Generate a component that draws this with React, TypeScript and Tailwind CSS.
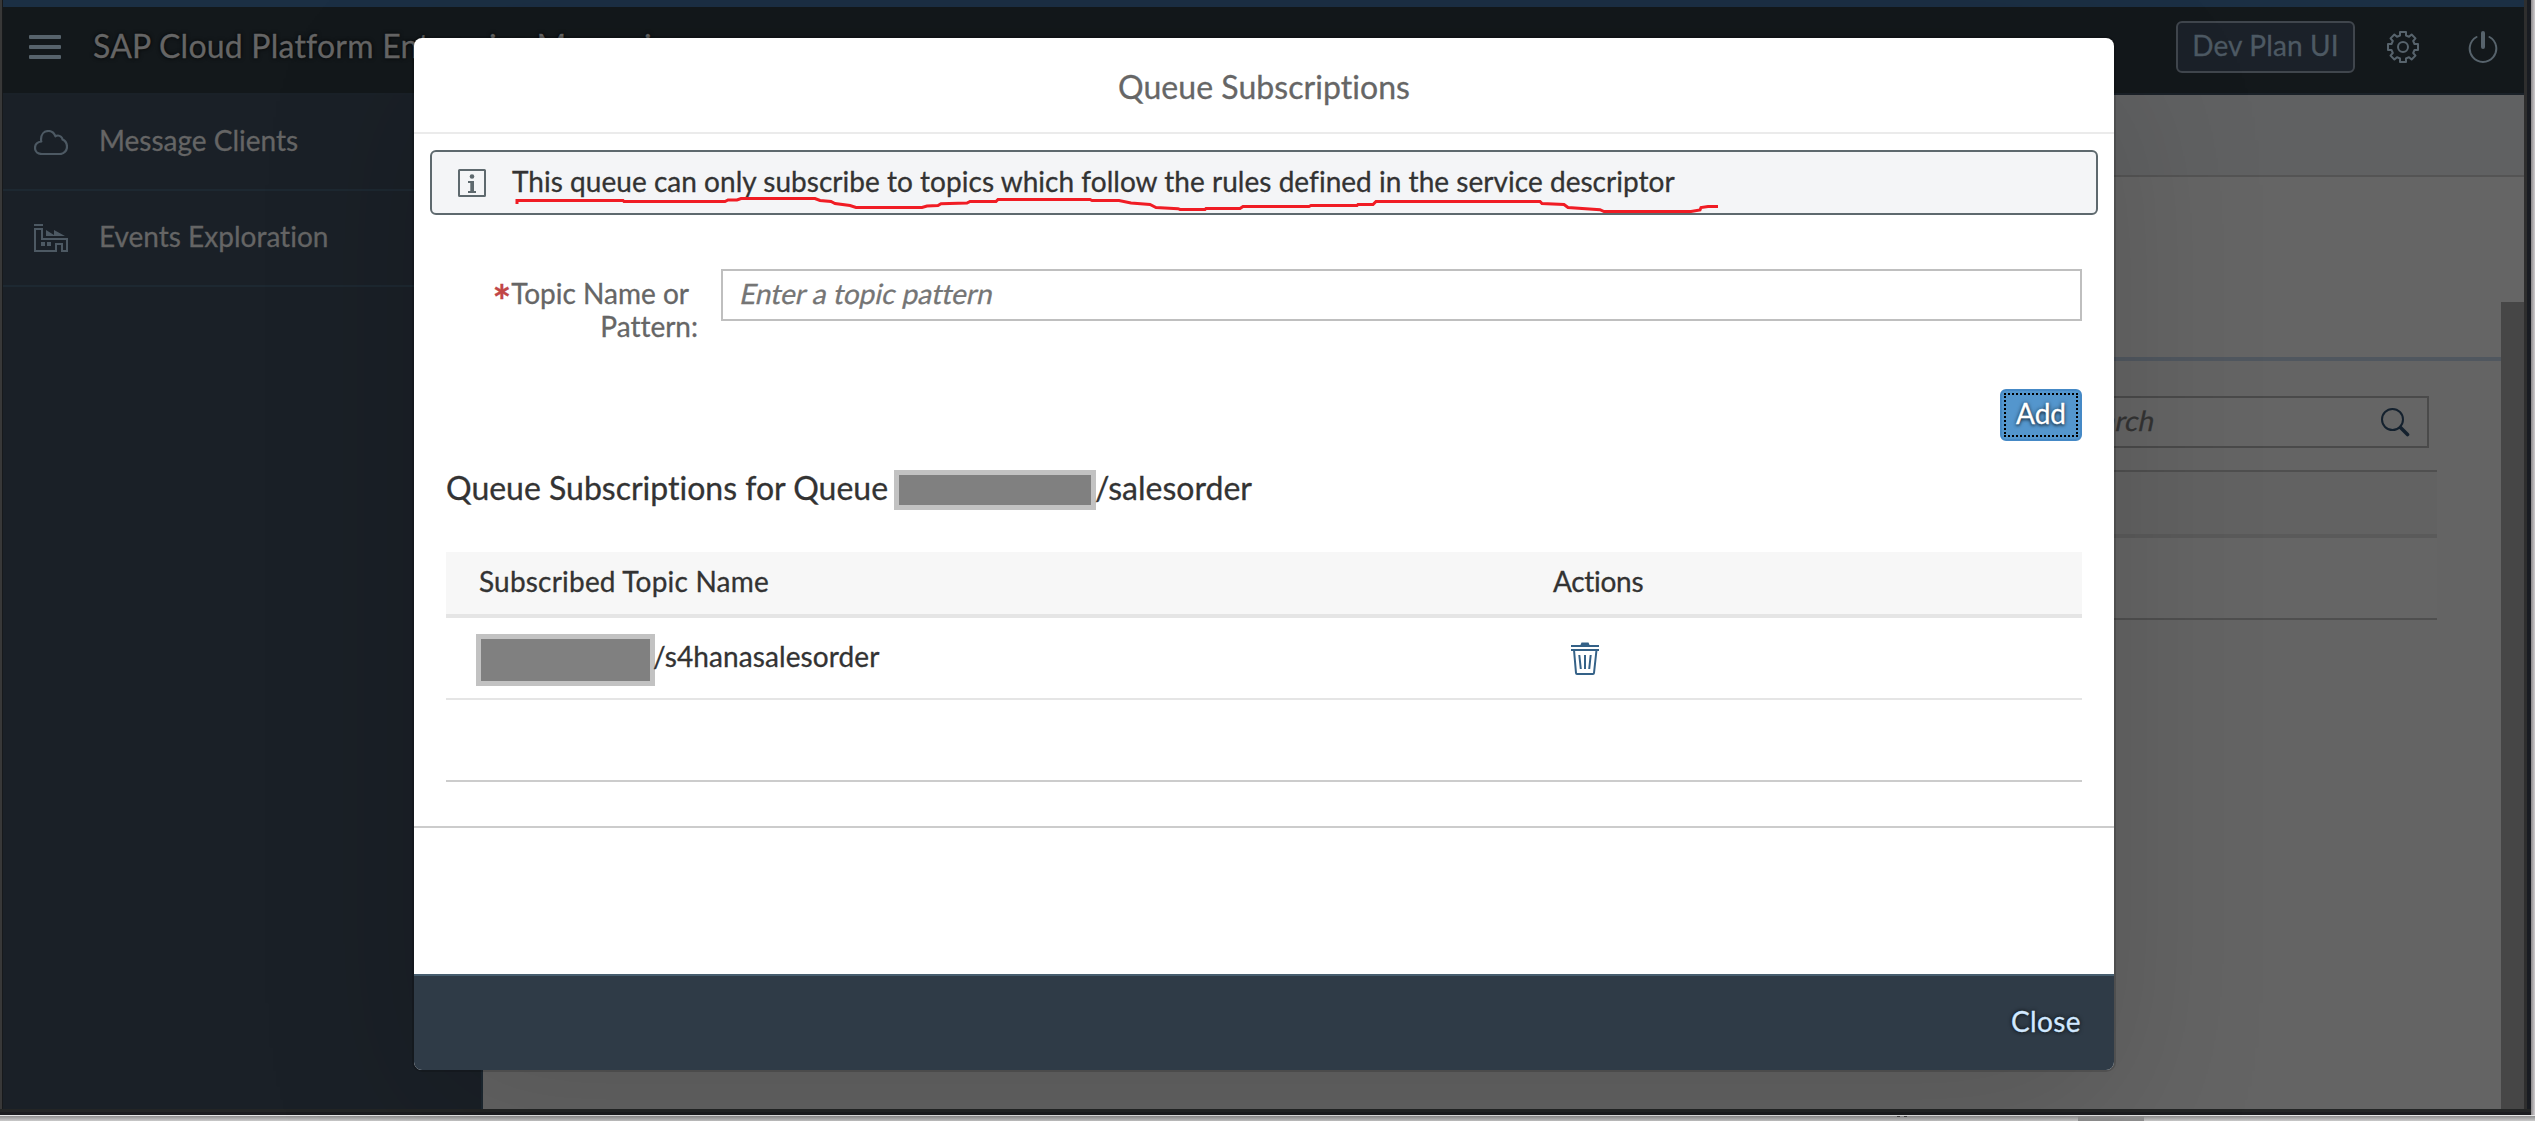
import type { ReactNode } from "react";

function CloudIcon() {
  return (
    <svg width="34" height="25" viewBox="0 0 34 25" fill="none" stroke="#4d5963" strokeWidth="2.200" strokeLinejoin="round">
      <path d="M8 24 H26 C30 24 33 20.500 33 17 C33 13.500 31 10.500 28.500 9.500 C28.500 7.500 26 5.500 24 5.500 C23 5.500 22 5.800 21.500 6.400 C20 2.500 17.500 1 14.500 1 C10 1 7 4.500 7 9.500 C7 10.200 7 11 7.300 11.500 C3.500 12 1 14.500 1 18 C1 21.500 4 24 8 24 Z" />
    </svg>
  );
}

function FactoryIcon() {
  return (
    <svg width="34" height="28" viewBox="0 0 34 28" fill="none" stroke="#4d5963" strokeWidth="2">
      <path d="M0 1 H9" />
      <path d="M1 27 V5 H8 V15 H33 V27 H28 V20 H22 V27 Z" />
      <path d="M12 12 V6 L20 11 V6 L31 12 Z" fill="#4d5963" stroke="none" />
      <path d="M7 18 H11 V22 H7 Z M13 18 H17 V22 H13 Z" fill="#4d5963" stroke="none" />
    </svg>
  );
}

function GearIcon() {
  return (
    <svg width="32" height="32" viewBox="0 0 32 32" fill="none" stroke="#57636c" strokeWidth="2" strokeLinejoin="round">
      <circle cx="16" cy="16" r="5" />
      <path d="M13 1 H19 V4.500 L22 5.800 L24.600 3.500 L28.500 7.400 L26.200 10 L27.500 13 H31 V19 H27.500 L26.200 22 L28.500 24.600 L24.600 28.500 L22 26.200 L19 27.500 V31 H13 V27.500 L10 26.200 L7.400 28.500 L3.500 24.600 L5.800 22 L4.500 19 H1 V13 H4.500 L5.800 10 L3.500 7.400 L7.400 3.500 L10 5.800 L13 4.500 Z" />
    </svg>
  );
}

function PowerIcon() {
  return (
    <svg width="30" height="32" viewBox="0 0 30 32" fill="none" stroke="#57636c" strokeLinecap="round">
      <path d="M8.500 6 A13.300 13.300 0 1 0 21.500 6" strokeWidth="2" />
      <path d="M15 2 V16" strokeWidth="4" />
    </svg>
  );
}

function SearchIcon() {
  return (
    <svg width="29" height="29" viewBox="0 0 29 29" fill="none" stroke="#14212e" strokeLinecap="round">
      <circle cx="11.500" cy="11.500" r="10.500" strokeWidth="2" />
      <path d="M19.500 19.500 L26.500 26.500" strokeWidth="3.600" />
    </svg>
  );
}

function InfoIcon() {
  return (
    <svg width="28" height="28" viewBox="0 0 28 28">
      <rect x="1" y="1" width="26" height="26" rx="0.500" fill="none" stroke="#5e696e" strokeWidth="2" />
      <circle cx="14" cy="7.500" r="2.300" fill="#5e696e" />
      <path d="M10 12 H16 V22 H18 V24 H10 V22 H12.300 V14 H10 Z" fill="#5e696e" />
    </svg>
  );
}

function TrashIcon() {
  return (
    <svg width="28" height="33" viewBox="0 0 28 33" fill="none" stroke="#346187" strokeWidth="2">
      <path d="M9 4 L10.500 0.500 H17.500 L19 4 Z" fill="#346187" stroke="none" />
      <path d="M0 4 H28 M0 8 H28" />
      <path d="M3 8 L5 31 Q5.100 32 6 32 H22 Q22.900 32 23 31 L25.500 8" />
      <path d="M8.300 13 L9.800 27 M14 13 V27 M19.700 13 L18.200 27" />
    </svg>
  );
}

function Hamburger() {
  return (
    <div className="flex w-8 flex-col gap-[6px]">
      <div className="h-1 rounded-[1px] bg-[#57636c]" />
      <div className="h-1 rounded-[1px] bg-[#57636c]" />
      <div className="h-1 rounded-[1px] bg-[#57636c]" />
    </div>
  );
}

function NavItem({ icon, label }: { icon: ReactNode; label: string }) {
  return (
    <div className="flex h-24 items-center border-b-2 border-[#1d2831] pl-[31px] text-[#656565]">
      <div className="w-[65px]">{icon}</div>
      <span className="pb-[4px]">{label}</span>
    </div>
  );
}

function Underline() {
  return (
    <svg
      className="pointer-events-none absolute left-[99px] top-[158px]"
      width="1210"
      height="18"
      viewBox="513 196 1210 18"
      fill="none"
      stroke="#f01c24"
      strokeWidth="3"
    >
      <path d="M517 204 V200.500 H623 L624 201.500 H725 L728 200 H737 L741 198.500 H815 L820 200.500 L831 201.500 L835 203.500 L850 205.500 L856 207.500 H922 L927 206 L938 205.500 L941 203.700 L967 203 L970 201.500 H996 L998 199.500 H1090 L1092 200.500 H1119 L1131 203 L1150 204.500 L1156 207.500 L1178 208.700 L1180 209.500 H1205 L1206 208.500 H1240 L1243 206.500 H1309 L1311 205.500 H1357 L1358 204.500 H1373 L1376 201.500 H1540 L1542 203.500 L1564 204.500 L1568 207.500 L1600 209.700 L1604 211.500 H1691 L1700 210 L1701 207.500 L1708 206.500 H1718" />
    </svg>
  );
}

function Dialog() {
  return (
    <div className="absolute left-[414px] top-[38px] flex h-[1032px] w-[1700px] flex-col overflow-visible rounded-[8px] bg-white text-[#333] shadow-[0_0_0_2px_rgba(0,0,0,0.15),0_40px_160px_0_rgba(0,0,0,0.15)]">
      <div className="flex h-24 items-center justify-center rounded-t-[8px] border-b-2 border-[#ebebeb] pt-[4px] text-[32px] text-[#666]">
        <span className="tracking-[0.05px]">Queue Subscriptions</span>
      </div>

      <div className="mx-4 mt-4 flex h-[65px] items-center rounded-[6px] border-2 border-[#5e696e] bg-[#f4f5f7] pl-[26px]">
        <InfoIcon />
        <span className="ml-[26px] pb-[3px] tracking-[0.03px]">
          This queue can only subscribe to topics which follow the rules defined in the service descriptor
        </span>
      </div>
      <Underline />

      <div className="mt-[54px] flex h-[77px] items-start pl-8 pr-8">
        <div className="w-[253px] pt-[8px] text-right leading-[33px] text-[#666]">
          <div className="flex justify-end pr-[10px]">
            <span className="h-[33px] pt-[7px] text-[44px] font-bold leading-[33px] text-[#c14646]">*</span>
            <span>Topic Name or</span>
          </div>
          <div className="pr-[1px]">Pattern:</div>
        </div>
        <div className="ml-[22px] flex h-[52px] flex-1 items-center border-2 border-[#bfbfbf] pb-[4px] pl-[18px] text-[#757575]">
          <span className="inline-block -skew-x-12">Enter a topic pattern</span>
        </div>
      </div>

      <div className="mt-[43px] flex justify-end pr-8">
        <button className="relative flex h-[52px] w-[82px] items-center justify-center rounded-[6px] border-2 border-[#4589c6] bg-[#5496cd] pb-[4px] text-white [text-shadow:0_0_4px_rgba(0,0,0,0.6),0_2px_3px_rgba(0,0,0,0.5)]">
          <span className="absolute inset-[2px] border-2 border-dotted border-black" />
          Add
        </button>
      </div>

      <div className="mt-[29px] flex h-10 items-center pl-8 text-[32px]">
        <span className="w-[448px] pb-[5px]">Queue Subscriptions for Queue</span>
        <div className="h-10 w-[202px] shrink-0 border-[5px] border-[#c2c2c2] bg-[#808080]" />
        <span className="-ml-px pb-[5px]">/salesorder</span>
      </div>

      <div className="mx-8 mt-[42px] border-b-2 border-[#ccc]">
        <div className="flex h-[66px] items-center border-b-4 border-[#e5e5e5] bg-[#f7f7f7] pb-[4px]">
          <span className="w-[1074px] pl-[33px] tracking-[0.2px]">Subscribed Topic Name</span>
          <span className="pl-[33px] tracking-[-0.3px]">Actions</span>
        </div>
        <div className="flex h-[82px] items-center border-b-2 border-[#e5e5e5]">
          <div className="flex w-[1125px] items-center pl-[30px]">
            <div className="mt-[4px] h-[52px] w-[179px] border-[5px] border-[#c2c2c2] bg-[#808080]" />
            <span className="-ml-[2px] pb-[4px] tracking-[0.1px]">/s4hanasalesorder</span>
          </div>
          <TrashIcon />
        </div>
        <div className="h-20" />
      </div>
      <div className="mt-11 h-[2px] bg-[#ccc]" />

      <div className="mt-auto flex h-[96px] items-center justify-end rounded-b-[8px] border-t-2 border-[#475e6f] bg-[#2f3b47] pb-[4px] pr-[33px] tracking-[0.4px] text-[#d1e8ff] [text-shadow:0_0_4px_#000]">
        Close
      </div>
    </div>
  );
}

export default function App() {
  return (
    <div className="relative h-[1121px] w-[2535px] overflow-hidden bg-[#1c1d20] font-['Lato',sans-serif] text-[28px] leading-[34px] whitespace-nowrap [font-variant-ligatures:none] [-webkit-text-stroke-width:0.3px]">
      <div className="flex h-[1109px]">
        <div className="w-[3px] border-r border-[#17191b] bg-[#383838]" />
        <div className="flex w-[2521px] flex-col">
          <div className="h-[7px] bg-[#1b2f44]" />
          <div className="flex h-[88px] items-center border-b-2 border-[#1a2128] bg-[#13181b] pb-[6px] pl-[26px] pr-[26px]">
            <Hamburger />
            <span className="ml-[32px] pb-[2px] text-[32px] tracking-[0.22px] text-[#656565] [text-shadow:0_0_4px_#000]">
              SAP Cloud Platform Enterprise Messaging
            </span>
            <div className="ml-auto flex h-[52px] w-[179px] items-center justify-center rounded-[6px] border-2 border-[#40464d] bg-[#1b2129] pb-[4px] tracking-[0.15px] text-[#4d5963]">
              Dev Plan UI
            </div>
            <div className="ml-[32px]">
              <GearIcon />
            </div>
            <div className="ml-[49px]">
              <PowerIcon />
            </div>
          </div>
          <div className="flex flex-1">
            <div className="w-[480px] border-r-2 border-[#1d2831] bg-[#1a2027]">
              <NavItem icon={<CloudIcon />} label="Message Clients" />
              <NavItem icon={<FactoryIcon />} label="Events Exploration" />
            </div>
            <div className="flex flex-1 flex-col bg-[#646464]">
              <div className="h-[82px] border-b-2 border-[#545454] bg-[#606162]" />
              <div className="flex flex-1">
                <div className="flex w-[2018px] flex-col">
                  <div className="h-[184px] border-b-4 border-[#50575f] bg-[#656565]" />
                  <div className="mt-[35px] flex justify-end pr-[72px]">
                    <div className="flex h-[52px] w-[383px] items-center justify-between border-2 border-[#4a4a4a] bg-[#656565] pl-[24px] pr-[17px] text-[#333]">
                      <span className="inline-block -skew-x-12 pb-[4px]">Search</span>
                      <SearchIcon />
                    </div>
                  </div>
                  <div className="mr-16 mt-[22px] h-[68px] border-b-4 border-t-2 border-b-[#5a5a5a] border-t-[#4f4f4f] bg-[#626262]" />
                  <div className="mr-16 h-[82px] border-b-2 border-[#4f4f4f] bg-[#656565]" />
                </div>
                <div className="flex flex-1 flex-col">
                  <div className="h-[125px] bg-[#656565]" />
                  <div className="flex-1 bg-[#464646]" />
                </div>
              </div>
            </div>
          </div>
        </div>
        <div className="flex flex-1">
          <div className="w-[3px] bg-[#2e2e2e]" />
          <div className="w-[4px] bg-[#191c22]" />
          <div className="w-[4px] bg-gradient-to-r from-[#8f8c8e] to-[#d0cdcf]" />
        </div>
      </div>
      <div className="flex">
        <div className="w-[2531px]">
          <div className="h-[3px] bg-[#232525]" />
          <div className="h-[3px] bg-[#1b1c1f]" />
        </div>
        <div className="flex-1 bg-gradient-to-r from-[#8f8c8e] to-[#d0cdcf]" />
      </div>
      <div className="flex h-[6px] border-t border-[#e4e4e4] bg-gradient-to-b from-[#8e8e8e] to-[#cbcbcb] pl-[1897px]">
        <div className="h-px w-[3px] bg-[#444]" />
        <div className="ml-[4px] h-px w-[3px] bg-[#444]" />
        <div className="ml-[171px] w-[66px] bg-[#909090]" />
      </div>
      <Dialog />
    </div>
  );
}
